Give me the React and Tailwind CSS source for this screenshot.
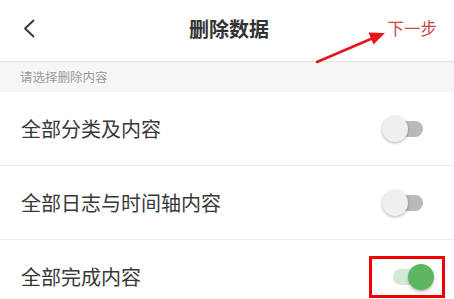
import React, { useState } from 'react';

const rows = [
  { id: 1, label: '全部分类及内容', on: false },
  { id: 2, label: '全部日志与时间轴内容', on: false },
  { id: 3, label: '全部完成内容', on: true },
];

const Toggle = ({ on, onClick }) => (
  <button onClick={onClick} className="relative w-[52px] h-[26px] shrink-0">
    <span
      className={
        on
          ? 'absolute left-[11px] right-[11px] top-[5px] h-[16px] rounded-full bg-[#d3e9d4]'
          : 'absolute left-[11px] right-[11px] top-[5px] h-[16px] rounded-full bg-[#b9b9b9]'
      }
    />
    <span
      className={
        on
          ? 'absolute right-0 top-0 w-[26px] h-[26px] rounded-full bg-[#5db761] shadow-[0_2px_3px_rgba(0,0,0,0.25)]'
          : 'absolute left-0 top-0 w-[26px] h-[26px] rounded-full bg-[#efefef] shadow-[0_1px_3px_rgba(0,0,0,0.3)]'
      }
    />
  </button>
);

const App = () => {
  const [items, setItems] = useState(rows);

  const toggle = (id) => {
    setItems(items.map((r) => (r.id === id ? { ...r, on: !r.on } : r)));
  };

  return (
    <div
      className="relative w-[454px] h-[299px] overflow-hidden bg-white"
      style={{ fontFamily: '"Noto Sans CJK SC", "Noto Sans", sans-serif' }}
    >
      {/* Header */}
      <div className="h-[62px] pb-[4px] grid grid-cols-[1fr_auto_1fr] items-center border-b border-[#e2e2e2] px-[22px]">
        <button className="w-[16px] h-[20px] flex items-center">
          <svg width="14" height="19" viewBox="0 0 14 19" fill="none">
            <path d="M11.5 1.5L3 9.5L11.5 17.5" stroke="#333" strokeWidth="1.8" strokeLinecap="round" strokeLinejoin="round" />
          </svg>
        </button>
        <h1 className="text-[20px] font-bold text-[#333] leading-none ml-[4px]">删除数据</h1>
        <div className="flex justify-end">
          <button className="text-[16.5px] text-[#c9463f] leading-none -mr-[5px]">下一步</button>
        </div>
      </div>

      {/* Section label */}
      <div className="h-[30px] bg-[#f6f6f6] flex items-center px-[20px]">
        <span className="text-[12.5px] text-[#9a9a9a]">请选择删除内容</span>
      </div>

      {/* Options */}
      {items.map((row) => (
        <div key={row.id} className="h-[74px] flex items-center justify-between border-b border-[#ececec] pl-[21px] pr-[20px]">
          <span className="text-[20px] text-[#383838]">{row.label}</span>
          <Toggle on={row.on} onClick={() => toggle(row.id)} />
        </div>
      ))}

      {/* Annotation arrow */}
      <svg className="absolute left-[310px] top-[25px]" width="80" height="45" viewBox="0 0 80 45">
        <line x1="7" y1="37" x2="62" y2="13.5" stroke="#e8141a" strokeWidth="2.5" strokeLinecap="round" />
        <polygon points="75,8 63.5,19.5 58.5,7.5" fill="#e8141a" />
      </svg>

      {/* Highlight box */}
      <div className="absolute left-[369px] top-[256px] w-[76px] h-[42px] border-[3px] border-[#f20000]" />
    </div>
  );
};

export default App;
